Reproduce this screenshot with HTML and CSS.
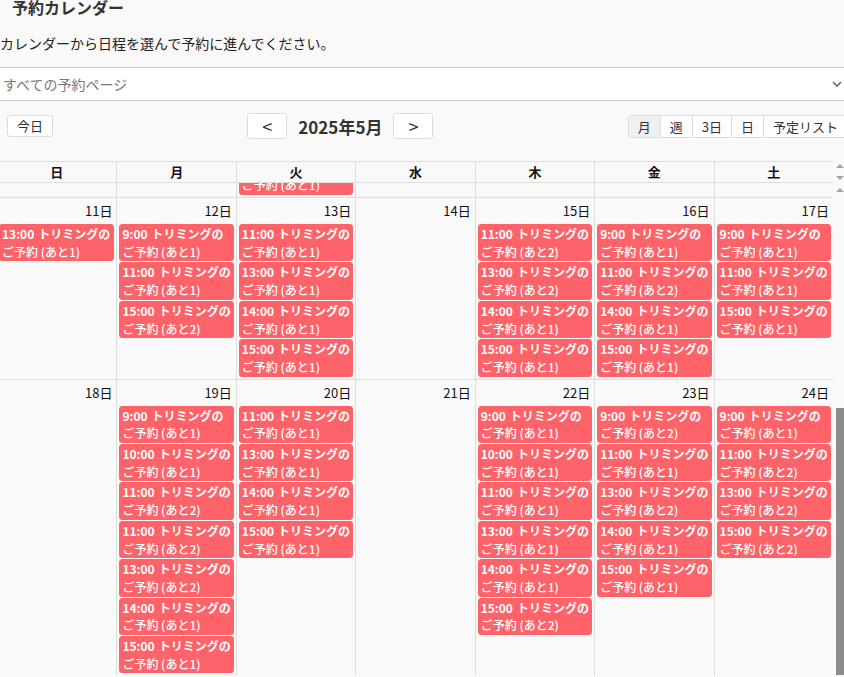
FILE: index.html
```html
<!DOCTYPE html>
<html lang="ja">
  <head>
    <meta charset="UTF-8" />
    <meta name="viewport" content="width=device-width, initial-scale=1.0" />
    <title>予約カレンダー</title>
    <link rel="stylesheet" href="styles.css">
  </head>
  <body>
    <header class="intro">
      <h1>予約カレンダー</h1>
      <p>カレンダーから日程を選んで予約に進んでください。</p>
    </header>

    <div class="picker">
      <span>すべての予約ページ</span>
      <svg width="10" height="6" viewBox="0 0 10 6">
        <path d="M1 1l4 4 4-4" fill="none" stroke="#666" stroke-width="1.6" />
      </svg>
    </div>

    <div class="toolbar">
      <div class="chunk">
        <button class="btn">今日</button>
      </div>
      <div class="chunk nav">
        <button class="btn arrow">&lt;</button>
        <h2>2025年5月</h2>
        <button class="btn arrow">&gt;</button>
      </div>
      <div class="chunk views">
        <button class="active">月</button>
        <button>週</button>
        <button>3日</button>
        <button>日</button>
        <button>予定リスト</button>
      </div>
    </div>

    <div class="cal">
      <div class="cal-head">
        <div class="head-row">
          <div>日</div>
          <div>月</div>
          <div>火</div>
          <div>水</div>
          <div>木</div>
          <div>金</div>
          <div>土</div>
        </div>
        <div class="sb sb-head"><i class="up"></i><i class="down"></i></div>
      </div>
      <div class="cal-body">
        <div class="weeks" id="weeks">
          <!-- tail of the previous week, scrolled mostly out of view -->
          <div class="week partial">
            <div class="day"></div>
            <div class="day"></div>
            <div class="day">
              <a class="ev"><span class="ev-head"><span class="ev-time">15:00</span>トリミングの</span><span class="ev-sub">ご予約 (あと1)</span></a>
            </div>
            <div class="day"></div>
            <div class="day"></div>
            <div class="day"></div>
            <div class="day"></div>
          </div>
        </div>
        <div class="sb"><i class="up"></i><div class="thumb"></div></div>
      </div>
    </div>

    <script>
      // "time left" per slot, one list per weekday (Sun..Sat)
      const weeks = [
        {
          start: 11,
          days: [
            ["13:00 1"],
            ["9:00 1", "11:00 1", "15:00 2"],
            ["11:00 1", "13:00 1", "14:00 1", "15:00 1"],
            [],
            ["11:00 2", "13:00 2", "14:00 1", "15:00 1"],
            ["9:00 1", "11:00 2", "14:00 1", "15:00 1"],
            ["9:00 1", "11:00 1", "15:00 1"],
          ],
        },
        {
          start: 18,
          days: [
            [],
            ["9:00 1", "10:00 1", "11:00 2", "11:00 2", "13:00 2", "14:00 1", "15:00 1"],
            ["11:00 1", "13:00 1", "14:00 1", "15:00 1"],
            [],
            ["9:00 1", "10:00 1", "11:00 1", "13:00 1", "14:00 1", "15:00 2"],
            ["9:00 2", "11:00 1", "13:00 2", "14:00 1", "15:00 1"],
            ["9:00 1", "11:00 2", "13:00 2", "15:00 2"],
          ],
        },
        {
          start: 25,
          days: [[], ["9:00 1"], ["11:00 1"], [], ["9:00 1"], ["9:00 1"], ["9:00 1"]],
        },
      ];

      function renderEvent(slot) {
        const [time, left] = slot.split(" ");
        const a = document.createElement("a");
        a.className = "ev";
        a.innerHTML =
          `<span class="ev-head"><span class="ev-time">${time}</span>トリミングの</span>` +
          `<span class="ev-sub">ご予約 (あと${left})</span>`;
        return a;
      }

      const container = document.getElementById("weeks");
      weeks.forEach((week) => {
        const row = document.createElement("div");
        row.className = "week";
        week.days.forEach((slots, i) => {
          const day = document.createElement("div");
          day.className = "day";
          const num = document.createElement("div");
          num.className = "day-num";
          num.innerText = week.start + i + "日";
          day.appendChild(num);
          slots.forEach((slot) => day.appendChild(renderEvent(slot)));
          row.appendChild(day);
        });
        container.appendChild(row);
      });
    </script>
  </body>
</html>
```

FILE: styles.css
```css
body {
  margin: 0;
  background-color: #f9f9f9;
  color: #222;
  font-family: "Noto Sans CJK JP", "Noto Sans", sans-serif;
  overflow: hidden;
}

.intro h1 {
  margin: -4px 0 0 12px;
  font-size: 16px;
  line-height: 23px;
  color: #333;
}

.intro p {
  margin: 14px 0 0;
  font-size: 14px;
  line-height: 20px;
}

.picker {
  margin-top: 14px;
  height: 32px;
  padding: 0 2px 0 3px;
  border-top: 1px solid #ccc;
  border-bottom: 1px solid #ccc;
  background-color: #fff;
  display: flex;
  align-items: center;
  justify-content: space-between;
  font-size: 14px;
  color: #777;
}

.toolbar {
  display: flex;
  justify-content: space-between;
  align-items: center;
  height: 26px;
  margin: 12px -4px 0 0;
  padding-left: 7px;
}

.chunk {
  display: flex;
  align-items: center;
}

.btn {
  height: 22px;
  padding: 0 9px;
  border: 1px solid #dcdcdc;
  border-radius: 3px;
  background-color: #fff;
  font-family: inherit;
  font-size: 13px;
  line-height: 20px;
  color: #333;
}

.btn.arrow {
  width: 40px;
  height: 26px;
  padding: 0;
  font-size: 18px;
}

.nav h2 {
  margin: 0 11px;
  font-size: 17px;
  color: #333;
}

.views {
  border: 1px solid #dcdcdc;
  border-radius: 3px;
  background-color: #fff;
  overflow: hidden;
}

.views button {
  height: 21px;
  padding: 0 9px;
  border: 0;
  border-left: 1px solid #dcdcdc;
  background: transparent;
  font-family: inherit;
  font-size: 13px;
  color: #333;
}

.views button:first-child {
  border-left: 0;
}

.views .active {
  background-color: #eef0f2;
}

.cal {
  margin-top: 22px;
}

.cal-head,
.cal-body {
  display: flex;
}

.cal-body {
  height: calc(100vh - 185px);
  overflow: hidden;
}

.head-row,
.week {
  display: grid;
  grid-template-columns: repeat(7, 1fr);
}

.head-row {
  flex: 1;
  margin-left: -3px;
  border-top: 1px solid #ddd;
  border-bottom: 1px solid #ddd;
}

.head-row div {
  border-left: 1px solid #ddd;
  text-align: center;
  font-size: 13px;
  font-weight: bold;
  line-height: 20px;
  color: #111;
}

.weeks {
  flex: 1;
  margin-left: -3px;
}

.week {
  border-bottom: 1px solid #ddd;
}

.day {
  padding: 0 2px 2px;
  border-left: 1px solid #ddd;
  min-width: 0;
}

.head-row div:first-child,
.day:first-child {
  border-left: 0;
}

.day-num {
  height: 25px;
  padding: 4px 2px 0 0;
  box-sizing: border-box;
  text-align: right;
  font-size: 13px;
  line-height: 18px;
  color: #111;
}

.partial .day {
  height: 14px;
  box-sizing: border-box;
  display: flex;
  flex-direction: column;
  justify-content: flex-end;
  overflow: hidden;
}

.ev {
  display: block;
  flex: none;
  margin-top: 1px;
  padding: 0 2px;
  border: 1px solid #fd6369;
  border-radius: 3px;
  background-color: #fd6369;
  color: #fff;
  font-size: 12px;
  line-height: 17.7px;
  white-space: nowrap;
  overflow: hidden;
}

.ev-head,
.ev-sub {
  display: block;
}

.ev-head {
  font-weight: bold;
}

.ev-sub {
  font-weight: 500;
}

.ev-time {
  margin-right: 4px;
}

/* drawn scrollbars */
.sb {
  width: 8px;
  padding-left: 3px;
  flex: none;
  display: flex;
  flex-direction: column;
  align-items: center;
}

.sb-head {
  justify-content: space-between;
  padding-top: 3px;
  padding-bottom: 3px;
  box-sizing: content-box;
  height: 16px;
}

.sb .up,
.sb .down {
  width: 0;
  height: 0;
  border-left: 4px solid transparent;
  border-right: 4px solid transparent;
}

.sb .up {
  border-bottom: 4px solid #a3a3a3;
}

.sb .down {
  border-top: 4px solid #a3a3a3;
}

.cal-body .sb .up {
  margin-top: 5px;
}

.thumb {
  width: 8px;
  flex: 1;
  margin-top: 216px;
  background-color: #8c8c8c;
}
```
